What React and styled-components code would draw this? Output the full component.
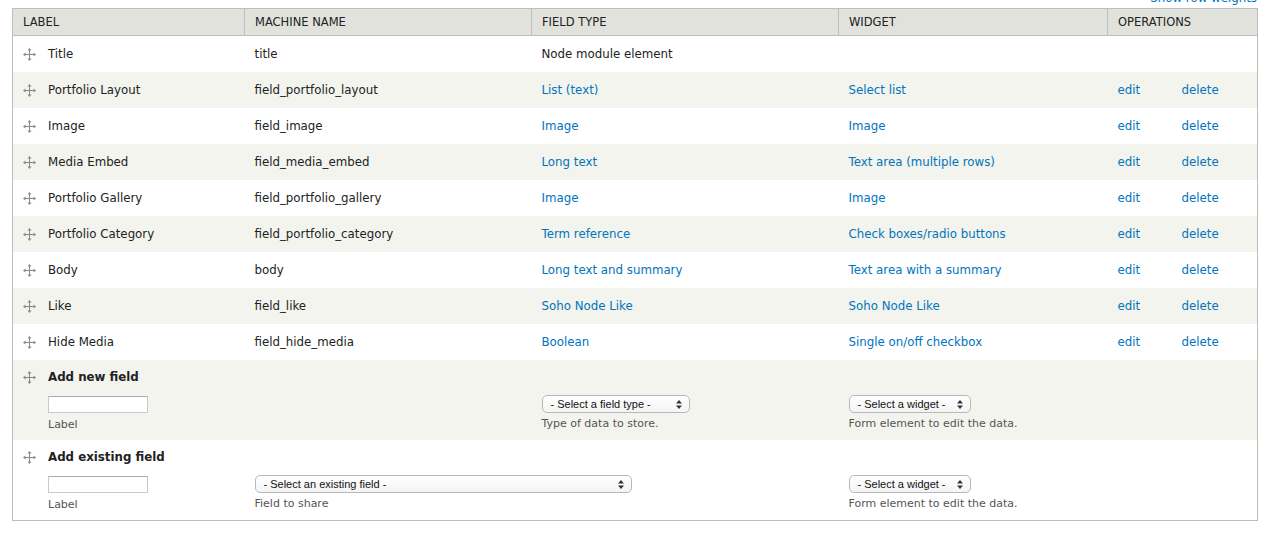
import styled, { createGlobalStyle } from "styled-components";

const GlobalStyle = createGlobalStyle`
  body {
    margin: 0;
    background: #fff;
    font-family: "DejaVu Sans", Verdana, sans-serif;
    font-size: 11.8px;
    color: #222;
  }
`;

const Page = styled.div`
  padding: 0 15px 0 12px;
`;

const WeightsBar = styled.div`
  height: 8px;
  overflow: hidden;
`;

const WeightsLink = styled.a`
  display: block;
  margin-top: -9px;
  line-height: 14px;
  text-align: right;
  color: #0074bd;
  text-decoration: none;
`;

const Table = styled.table`
  width: 1245px;
  border-collapse: collapse;
  border: 1px solid #bebfb9;
  table-layout: fixed;
`;

const Th = styled.th`
  height: 26px;
  padding: 0 0 0 10px;
  background: #e1e2dc;
  border-bottom: 1px solid #bebfb9;
  border-left: 1px solid #bebfb9;
  text-align: left;
  font-weight: normal;
  text-transform: uppercase;
  font-size: 11.5px;
  color: #222;
  &:first-child {
    border-left: none;
  }
`;

const Tr = styled.tr`
  background: ${(p) => (p.$alt ? "#f3f4ee" : "#fff")};
`;

const Td = styled.td`
  height: 36px;
  padding: 0 0 0 10px;
  vertical-align: middle;
  white-space: nowrap;
`;

const FormTd = styled.td`
  height: 80px;
  padding: 10px 0 0 10px;
  vertical-align: top;
  box-sizing: border-box;
`;

const LabelCell = styled.div`
  display: flex;
  align-items: center;
  gap: 12px;
  font-weight: ${(p) => (p.$bold ? "bold" : "normal")};
`;

const Link = styled.a`
  color: #0074bd;
  text-decoration: none;
`;

const Ops = styled.div`
  display: flex;
`;

const OpLink = styled(Link)`
  width: 64px;
`;

const FieldStack = styled.div`
  display: flex;
  flex-direction: column;
  gap: ${(p) => p.$gap || 3}px;
  margin-left: ${(p) => p.$indent || 0}px;
`;

const Spacer = styled.div`
  height: ${(p) => p.$h}px;
`;

const TextInput = styled.input`
  box-sizing: border-box;
  width: 100px;
  height: 17px;
  margin: 0;
  border: 1px solid #c9c9c9;
  border-top-color: #aaa;
  background: #fff;
`;

const Select = styled.div`
  box-sizing: border-box;
  width: ${(p) => p.$w}px;
  height: 18px;
  display: flex;
  align-items: center;
  justify-content: space-between;
  padding: 0 7px 0 8px;
  border: 1px solid #b8b8b8;
  border-radius: 5px;
  background: linear-gradient(#fff, #f4f4f4);
  font-family: "Liberation Sans", Arial, sans-serif;
  font-size: 11px;
  color: #111;
`;

const Desc = styled.div`
  font-size: 11px;
  color: #555;
  line-height: 16px;
`;

const DragIcon = () => (
  <svg width="13" height="13" viewBox="0 0 13 13" fill="#888">
    <rect x="6" y="2" width="1" height="9" />
    <rect x="2" y="6" width="9" height="1" />
    <path d="M6.5 0 L4.5 2.5 H8.5 Z" />
    <path d="M6.5 13 L4.5 10.5 H8.5 Z" />
    <path d="M0 6.5 L2.5 4.5 V8.5 Z" />
    <path d="M13 6.5 L10.5 4.5 V8.5 Z" />
  </svg>
);

const Arrows = () => (
  <svg width="6" height="9" viewBox="0 0 6 9" fill="#333">
    <path d="M3 0 L6 3.5 H0 Z" />
    <path d="M3 9 L6 5.5 H0 Z" />
  </svg>
);

const rows = [
  ["Title", "title", "Node module element", "", false],
  ["Portfolio Layout", "field_portfolio_layout", "List (text)", "Select list", true],
  ["Image", "field_image", "Image", "Image", true],
  ["Media Embed", "field_media_embed", "Long text", "Text area (multiple rows)", true],
  ["Portfolio Gallery", "field_portfolio_gallery", "Image", "Image", true],
  ["Portfolio Category", "field_portfolio_category", "Term reference", "Check boxes/radio buttons", true],
  ["Body", "body", "Long text and summary", "Text area with a summary", true],
  ["Like", "field_like", "Soho Node Like", "Soho Node Like", true],
  ["Hide Media", "field_hide_media", "Boolean", "Single on/off checkbox", true],
];

function SelectField({ w, text, desc }) {
  return (
    <FieldStack>
      <Spacer $h={22} />
      <Select $w={w}>
        <span>{text}</span>
        <Arrows />
      </Select>
      <Desc>{desc}</Desc>
    </FieldStack>
  );
}

function AddLabel({ title }) {
  return (
    <>
      <LabelCell $bold>
        <DragIcon />
        {title}
      </LabelCell>
      <FieldStack $indent={25} $gap={4}>
        <Spacer $h={8} />
        <TextInput />
        <Desc>Label</Desc>
      </FieldStack>
    </>
  );
}

function App() {
  return (
    <Page>
      <GlobalStyle />
      <WeightsBar>
        <WeightsLink href="#">Show row weights</WeightsLink>
      </WeightsBar>
      <Table>
        <colgroup>
          <col style={{ width: 232 }} />
          <col style={{ width: 287 }} />
          <col style={{ width: 307 }} />
          <col style={{ width: 269 }} />
          <col style={{ width: 150 }} />
        </colgroup>
        <thead>
          <tr>
            <Th>Label</Th>
            <Th>Machine name</Th>
            <Th>Field type</Th>
            <Th>Widget</Th>
            <Th>Operations</Th>
          </tr>
        </thead>
        <tbody>
          {rows.map(([label, machine, type, widget, linked], i) => (
            <Tr key={machine} $alt={i % 2 === 1}>
              <Td>
                <LabelCell>
                  <DragIcon />
                  {label}
                </LabelCell>
              </Td>
              <Td>{machine}</Td>
              <Td>{linked ? <Link href="#">{type}</Link> : type}</Td>
              <Td>{widget && <Link href="#">{widget}</Link>}</Td>
              <Td>
                {linked && (
                  <Ops>
                    <OpLink href="#">edit</OpLink>
                    <Link href="#">delete</Link>
                  </Ops>
                )}
              </Td>
            </Tr>
          ))}
          <Tr $alt>
            <FormTd>
              <AddLabel title="Add new field" />
            </FormTd>
            <FormTd />
            <FormTd>
              <SelectField w={148} text="- Select a field type -" desc="Type of data to store." />
            </FormTd>
            <FormTd>
              <SelectField w={122} text="- Select a widget -" desc="Form element to edit the data." />
            </FormTd>
            <FormTd />
          </Tr>
          <Tr>
            <FormTd>
              <AddLabel title="Add existing field" />
            </FormTd>
            <FormTd>
              <SelectField w={377} text="- Select an existing field -" desc="Field to share" />
            </FormTd>
            <FormTd />
            <FormTd>
              <SelectField w={122} text="- Select a widget -" desc="Form element to edit the data." />
            </FormTd>
            <FormTd />
          </Tr>
        </tbody>
      </Table>
    </Page>
  );
}

export default App;
